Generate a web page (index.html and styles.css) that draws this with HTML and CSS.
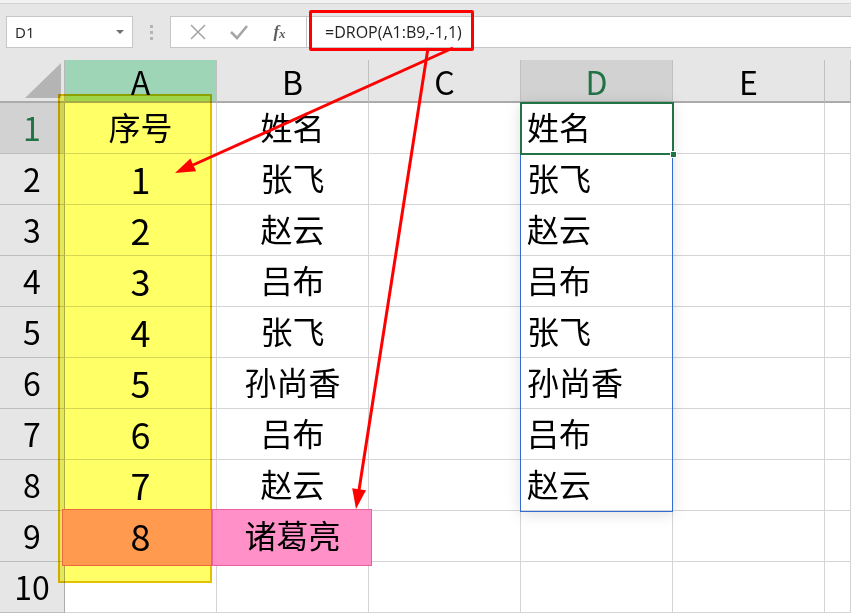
FILE: index.html
```html
<!DOCTYPE html>
<html lang="zh-CN">
  <head>
    <meta charset="UTF-8" />
    <meta name="viewport" content="width=device-width, initial-scale=1.0" />
    <title>DROP</title>
    <link rel="stylesheet" href="styles.css">
  </head>
  <body>
    <div class="page">
        <div class="topbar">
            <div class="name-box">
                <span>D1</span>
                <span class="name-arrow"></span>
            </div>
            <div class="grip"><i></i><i></i><i></i></div>
            <div class="fx-buttons">
                <span class="fx-btn">
                    <svg width="18" height="18" viewBox="0 0 18 18"><path d="M2 2 L16 16 M16 2 L2 16" stroke="#a6a6a6" stroke-width="1.6" fill="none"/></svg>
                </span>
                <span class="fx-btn">
                    <svg width="20" height="18" viewBox="0 0 20 18"><path d="M2 9 L8 15 L18 3" stroke="#a6a6a6" stroke-width="2.6" fill="none"/></svg>
                </span>
                <span class="fx-btn fx-label"><i>f</i><i class="fx-x">x</i></span>
            </div>
            <div class="formula">=DROP(A1:B9,-1,1)</div>
            <div class="formula-mark"></div>
        </div>

        <div class="sheet">
            <div class="corner"><span class="corner-tri"></span></div>
            <div class="col-head col-a">A</div>
            <div class="col-head">B</div>
            <div class="col-head">C</div>
            <div class="col-head col-sel">D</div>
            <div class="col-head">E</div>
            <div class="col-head"></div>

            <div class="row-head row-sel">1</div>
            <div class="cell center"><span>序号</span></div>
            <div class="cell center"><span>姓名</span></div>
            <div class="cell"></div>
            <div class="cell left"><span>姓名</span></div>
            <div class="cell"></div>
            <div class="cell"></div>

            <div class="row-head">2</div>
            <div class="cell center num"><span>1</span></div>
            <div class="cell center"><span>张飞</span></div>
            <div class="cell"></div>
            <div class="cell left"><span>张飞</span></div>
            <div class="cell"></div>
            <div class="cell"></div>

            <div class="row-head">3</div>
            <div class="cell center num"><span>2</span></div>
            <div class="cell center"><span>赵云</span></div>
            <div class="cell"></div>
            <div class="cell left"><span>赵云</span></div>
            <div class="cell"></div>
            <div class="cell"></div>

            <div class="row-head">4</div>
            <div class="cell center num"><span>3</span></div>
            <div class="cell center"><span>吕布</span></div>
            <div class="cell"></div>
            <div class="cell left"><span>吕布</span></div>
            <div class="cell"></div>
            <div class="cell"></div>

            <div class="row-head">5</div>
            <div class="cell center num"><span>4</span></div>
            <div class="cell center"><span>张飞</span></div>
            <div class="cell"></div>
            <div class="cell left"><span>张飞</span></div>
            <div class="cell"></div>
            <div class="cell"></div>

            <div class="row-head">6</div>
            <div class="cell center num"><span>5</span></div>
            <div class="cell center"><span>孙尚香</span></div>
            <div class="cell"></div>
            <div class="cell left"><span>孙尚香</span></div>
            <div class="cell"></div>
            <div class="cell"></div>

            <div class="row-head">7</div>
            <div class="cell center num"><span>6</span></div>
            <div class="cell center"><span>吕布</span></div>
            <div class="cell"></div>
            <div class="cell left"><span>吕布</span></div>
            <div class="cell"></div>
            <div class="cell"></div>

            <div class="row-head">8</div>
            <div class="cell center num"><span>7</span></div>
            <div class="cell center"><span>赵云</span></div>
            <div class="cell"></div>
            <div class="cell left"><span>赵云</span></div>
            <div class="cell"></div>
            <div class="cell"></div>

            <div class="row-head">9</div>
            <div class="cell center num"><span>8</span></div>
            <div class="cell center"><span>诸葛亮</span></div>
            <div class="cell"></div>
            <div class="cell"></div>
            <div class="cell"></div>
            <div class="cell"></div>

            <div class="row-head">10</div>
            <div class="cell"></div>
            <div class="cell"></div>
            <div class="cell"></div>
            <div class="cell"></div>
            <div class="cell"></div>
            <div class="cell"></div>

            <!-- highlight marks drawn over the grid -->
            <div class="mark-yellow"></div>
            <div class="mark-orange"></div>
            <div class="mark-pink"></div>
            <div class="spill"></div>
            <div class="active-cell"><span class="fill-handle"></span></div>
        </div>

        <svg class="arrows" width="851" height="614" viewBox="0 0 851 614">
            <line x1="453" y1="48" x2="193" y2="165" stroke="#ff0000" stroke-width="3"/>
            <polygon points="175,173 196.1,171.2 190.4,158.4" fill="#ff0000"/>
            <line x1="428" y1="48" x2="359" y2="490" stroke="#ff0000" stroke-width="3"/>
            <polygon points="356,509 366,490.3 352.2,488.2" fill="#ff0000"/>
        </svg>
    </div>
  </body>
</html>
```

FILE: styles.css
```css
* {
    margin: 0;
    padding: 0;
    box-sizing: border-box;
}

body {
    font-family: "Noto Sans CJK SC", "Noto Sans", sans-serif;
    background: #ffffff;
    width: 851px;
    height: 614px;
    overflow: hidden;
}

.page {
    position: relative;
    width: 851px;
    height: 614px;
}

/* formula bar */
.topbar {
    position: relative;
    height: 60px;
    background: #e6e6e6;
    border-top: 3px solid #f2f2f2;
    display: flex;
    align-items: flex-start;
    padding-top: 13px;
    padding-left: 6px;
}

.topbar::before {
    content: '';
    position: absolute;
    top: 0;
    left: 0;
    right: 0;
    height: 1px;
    background: #d4d4d4;
}

.name-box {
    width: 127px;
    height: 32px;
    background: #fff;
    border: 1px solid #c6c6c6;
    display: flex;
    align-items: center;
    justify-content: space-between;
    padding: 0 8px 0 8px;
    font-family: "Open Sans", "Noto Sans", sans-serif;
    font-size: 15px;
    color: #222;
}

.name-arrow {
    width: 0;
    height: 0;
    border-left: 4px solid transparent;
    border-right: 4px solid transparent;
    border-top: 4px solid #707070;
}

.grip {
    width: 37px;
    height: 32px;
    display: flex;
    flex-direction: column;
    align-items: center;
    justify-content: center;
    gap: 3px;
}

.grip i {
    width: 3px;
    height: 3px;
    background: #b4b4b4;
}

.fx-buttons {
    width: 137px;
    height: 32px;
    background: #fff;
    border: 1px solid #c6c6c6;
    display: flex;
    align-items: center;
    justify-content: space-around;
    padding: 0 6px;
}

.fx-btn {
    width: 30px;
    display: flex;
    justify-content: center;
}

.fx-label {
    font-family: "Liberation Serif", serif;
    font-size: 17px;
    font-weight: bold;
    color: #5e5e5e;
}

.fx-x {
    font-size: 13px;
    margin-top: 4px;
}

.formula {
    flex: 1;
    height: 32px;
    background: #fff;
    border-top: 1px solid #c6c6c6;
    border-bottom: 1px solid #c6c6c6;
    padding-left: 18px;
    line-height: 30px;
    font-family: "Open Sans", "Noto Sans", sans-serif;
    font-size: 16px;
    color: #222;
}

.formula-mark {
    position: absolute;
    left: 309px;
    top: 7px;
    width: 165px;
    height: 41px;
    border: 3px solid #ff0000;
    border-radius: 2px;
}

/* grid */
.sheet {
    position: relative;
    display: grid;
    grid-template-columns: 65px repeat(5, 152px) 1fr;
    grid-template-rows: 43px repeat(10, 51px);
    font-size: 32px;
    color: #000;
}

.corner {
    position: relative;
    background: #e6e6e6;
    border-bottom: 2px solid #ababab;
    border-right: 1px solid #b8b8b8;
}

.corner-tri {
    position: absolute;
    right: 3px;
    bottom: 3px;
    width: 36px;
    height: 35px;
    background: #b4b4b4;
    clip-path: polygon(100% 0, 100% 100%, 0 100%);
}

.col-head {
    background: #e6e6e6;
    border-bottom: 2px solid #ababab;
    border-right: 1px solid #c0c0c0;
    display: flex;
    align-items: center;
    justify-content: center;
    font-size: 32px;
    line-height: 1;
    padding-top: 1px;
}

.col-a {
    background: #9fd5b7;
}

.col-sel {
    background: #d2d2d2;
    color: #217346;
}

.row-head {
    background: #e6e6e6;
    border-right: 1px solid #ababab;
    border-bottom: 1px solid #bdbdbd;
    display: flex;
    align-items: center;
    justify-content: center;
    font-size: 32px;
    line-height: 1;
    padding-bottom: 2px;
    position: relative;
    z-index: 3;
}

.row-sel {
    background: #d2d2d2;
    color: #217346;
}

.cell {
    border-right: 1px solid #d4d4d4;
    border-bottom: 1px solid #d4d4d4;
    display: flex;
    align-items: center;
    padding-bottom: 4px;
}

.cell span {
    position: relative;
    z-index: 5;
    line-height: 1;
}

.num {
    font-size: 36px;
    padding-bottom: 3px;
}

.center {
    justify-content: center;
}

.left {
    padding-left: 6px;
}

/* overlay marks */
.mark-yellow {
    position: absolute;
    left: 58px;
    top: 34px;
    width: 154px;
    height: 489px;
    background: #ffff66;
    border: 2px solid #e2c100;
    mix-blend-mode: multiply;
    z-index: 4;
}

.mark-orange {
    position: absolute;
    left: 62px;
    top: 449px;
    width: 150px;
    height: 57px;
    background: #ff9a4e;
    border: 1px solid #ee6a3e;
    z-index: 4;
}

.mark-pink {
    position: absolute;
    left: 212px;
    top: 449px;
    width: 160px;
    height: 57px;
    background: #ff90c8;
    border: 1px solid #ec5f9f;
    z-index: 4;
}

.spill {
    position: absolute;
    left: 520px;
    top: 42px;
    width: 153px;
    height: 410px;
    border: 1px solid #2f6bd0;
    box-shadow: 0 2px 14px rgba(0, 0, 0, 0.13);
    z-index: 1;
}

.active-cell {
    position: absolute;
    left: 520px;
    top: 42px;
    width: 154px;
    height: 53px;
    border: 2px solid #217346;
    z-index: 6;
}

.fill-handle {
    position: absolute;
    right: -5px;
    bottom: -5px;
    width: 7px;
    height: 7px;
    background: #217346;
    border: 1px solid #fff;
}

.arrows {
    position: absolute;
    left: 0;
    top: 0;
    z-index: 10;
}
```
